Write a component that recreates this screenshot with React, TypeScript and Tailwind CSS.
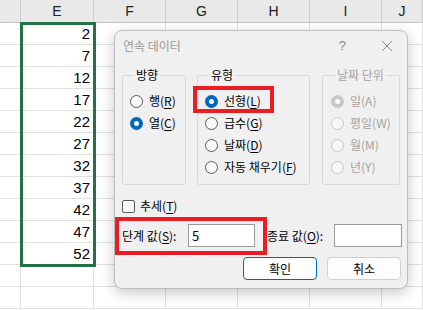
import React from "react";

const FONT = '"Noto Sans CJK KR", "Noto Sans", sans-serif';

function Mn({ pre, k }: { pre: string; k: string }) {
  return (
    <span>
      {pre}(<span className="underline underline-offset-2">{k}</span>)
    </span>
  );
}

function Radio({
  checked,
  disabled,
  children,
}: {
  checked?: boolean;
  disabled?: boolean;
  children: React.ReactNode;
}) {
  let circle = "";
  if (checked && !disabled) circle = "bg-[#0067c0]";
  else if (checked && disabled) circle = "bg-[#c8c8c8]";
  else if (disabled) circle = "border border-[#c8c8c8] bg-[#f7f7f7]";
  else circle = "border border-[#5a5a5a] bg-[#f9f9f9]";
  return (
    <div className="flex h-[22px] items-center gap-[6px]">
      <div className={`flex h-[13px] w-[13px] shrink-0 items-center justify-center rounded-full ${circle}`}>
        {checked && <div className="h-[5px] w-[5px] rounded-full bg-white" />}
      </div>
      <span className={`whitespace-nowrap text-[12px] leading-[16px] ${disabled ? "text-[#a3a3a3]" : "text-black"}`}>
        {children}
      </span>
    </div>
  );
}

function Group({
  title,
  width,
  disabled,
  pl,
  children,
}: {
  title: string;
  width: string;
  disabled?: boolean;
  pl: string;
  children: React.ReactNode;
}) {
  return (
    <fieldset className={`h-[118px] ${width} shrink-0 rounded-[2px] border border-[#d9d9d9] ${pl}`}>
      <legend className={`ml-[4px] px-[2px] text-[12px] leading-[16px] ${disabled ? "text-[#a3a3a3]" : "text-black"}`}>
        {title}
      </legend>
      <div className="pt-[7px]">{children}</div>
    </fieldset>
  );
}

export default function App() {
  const cols = [
    { w: "w-[21px]", l: "" },
    { w: "w-[73px]", l: "E" },
    { w: "w-[72px]", l: "F" },
    { w: "w-[72px]", l: "G" },
    { w: "w-[72px]", l: "H" },
    { w: "w-[72px]", l: "I" },
    { w: "w-[41px]", l: "J" },
  ];
  const values = [2, 7, 12, 17, 22, 27, 32, 37, 42, 47, 52];
  const rows = Array.from({ length: 13 }, (_, i) => i);

  return (
    <div
      className="relative h-[310px] w-[423px] overflow-hidden bg-white"
      style={{ fontFamily: FONT }}
    >
      {/* header */}
      <div className="flex h-[23px] border-b border-[#c4c4c4] bg-[#e9e9e9]">
        {cols.map((c, i) => (
          <div
            key={i}
            className={`${c.w} flex shrink-0 items-center justify-center border-r border-[#cfcfcf] text-[14px] text-[#222]`}
            style={{ fontFamily: '"Liberation Sans", sans-serif' }}
          >
            {c.l}
          </div>
        ))}
      </div>
      {/* rows */}
      {rows.map((r) => (
        <div key={r} className="flex h-[22px] border-b border-[#e0e0e0]">
          {cols.map((c, i) => (
            <div
              key={i}
              className={`${c.w} flex shrink-0 items-end justify-end border-r border-[#e0e0e0] pr-[3px] text-[15px] leading-[20px] text-black`}
              style={{ fontFamily: '"Liberation Sans", sans-serif' }}
            >
              {i === 1 && r < values.length ? values[r] : ""}
            </div>
          ))}
        </div>
      ))}

      {/* selection */}
      <div className="absolute left-[20px] top-[22px] h-[245px] w-[76px] border-[3px] border-[#217346]" />

      {/* dialog */}
      <div className="absolute left-[114px] top-[30px] flex h-[259px] w-[294px] flex-col rounded-[8px] border border-[#bdbdbd] bg-[#f0f0f0] shadow-[0_4px_14px_rgba(0,0,0,0.22)]">
        {/* title bar */}
        <div className="flex h-[27px] items-center pl-[8px] pr-[14px] pt-[3px]">
          <span className="text-[12px] leading-[16px] text-[#9a9a9a]">연속 데이터</span>
          <span className="ml-auto mr-[35px] text-[13px] text-[#8a8a8a]" style={{ fontFamily: '"Liberation Sans", sans-serif' }}>?</span>
          <svg width="12" height="12" viewBox="0 0 12 12">
            <path d="M1 1 L11 11 M11 1 L1 11" stroke="#8a8a8a" strokeWidth="1" fill="none" />
          </svg>
        </div>

        {/* groups */}
        <div className="mt-[9px] flex pl-[7px]">
          <Group title="방향" width="w-[64px]" pl="pl-[7px]">
            <Radio><Mn pre="행" k="R" /></Radio>
            <Radio checked><Mn pre="열" k="C" /></Radio>
          </Group>
          <div className="w-[11px] shrink-0" />
          <Group title="유형" width="w-[113px]" pl="pl-[7px]">
            <Radio checked><Mn pre="선형" k="L" /></Radio>
            <Radio><Mn pre="급수" k="G" /></Radio>
            <Radio><Mn pre="날짜" k="D" /></Radio>
            <Radio><Mn pre="자동 채우기" k="F" /></Radio>
          </Group>
          <div className="w-[12px] shrink-0" />
          <Group title="날짜 단위" width="w-[78px]" disabled pl="pl-[8px]">
            <Radio checked disabled>일(A)</Radio>
            <Radio disabled>평일(W)</Radio>
            <Radio disabled>월(M)</Radio>
            <Radio disabled>년(Y)</Radio>
          </Group>
        </div>

        {/* trend checkbox */}
        <div className="mt-[11px] flex h-[20px] items-center gap-[5px] pl-[7px]">
          <div className="h-[13px] w-[13px] rounded-[2px] border border-[#5a5a5a] bg-[#f9f9f9]" />
          <span className="text-[12px] leading-[16px] text-black"><Mn pre="추세" k="T" /></span>
        </div>

        {/* inputs */}
        <div className="mt-[8px] flex h-[23px] items-center pl-[7px]">
          <div className="w-[66px] shrink-0 whitespace-nowrap text-[12px] leading-[16px] text-black">
            단계 값(<span className="underline underline-offset-2">S</span>):
          </div>
          <div className="flex h-[23px] w-[67px] shrink-0 items-center border border-[#9a9a9a] bg-white pl-[3px] text-[13px] text-black">
            5
          </div>
          <div className="w-[12px] shrink-0" />
          <div className="w-[67px] shrink-0 whitespace-nowrap text-[12px] leading-[16px] text-black">
            종료 값(<span className="underline underline-offset-2">O</span>):
          </div>
          <div className="h-[23px] w-[68px] shrink-0 border border-[#9a9a9a] bg-white" />
        </div>

        {/* buttons */}
        <div className="mt-[10px] flex justify-end gap-[10px] pr-[6px]">
          <button className="flex h-[23px] w-[74px] items-center justify-center rounded-[4px] border border-[#0067c0] bg-[#fdfdfd] text-[12px] leading-[16px] text-black">
            확인
          </button>
          <button className="flex h-[23px] w-[74px] items-center justify-center rounded-[4px] border border-[#d0d0d0] bg-[#fdfdfd] text-[12px] leading-[16px] text-black">
            취소
          </button>
        </div>
      </div>

      {/* red highlight boxes */}
      <div className="absolute left-[193px] top-[86px] h-[27px] w-[81px] border-[4px] border-[#ec1c24]" />
      <div className="absolute left-[115px] top-[217px] h-[38px] w-[152px] border-[4px] border-[#ec1c24]" />
    </div>
  );
}
